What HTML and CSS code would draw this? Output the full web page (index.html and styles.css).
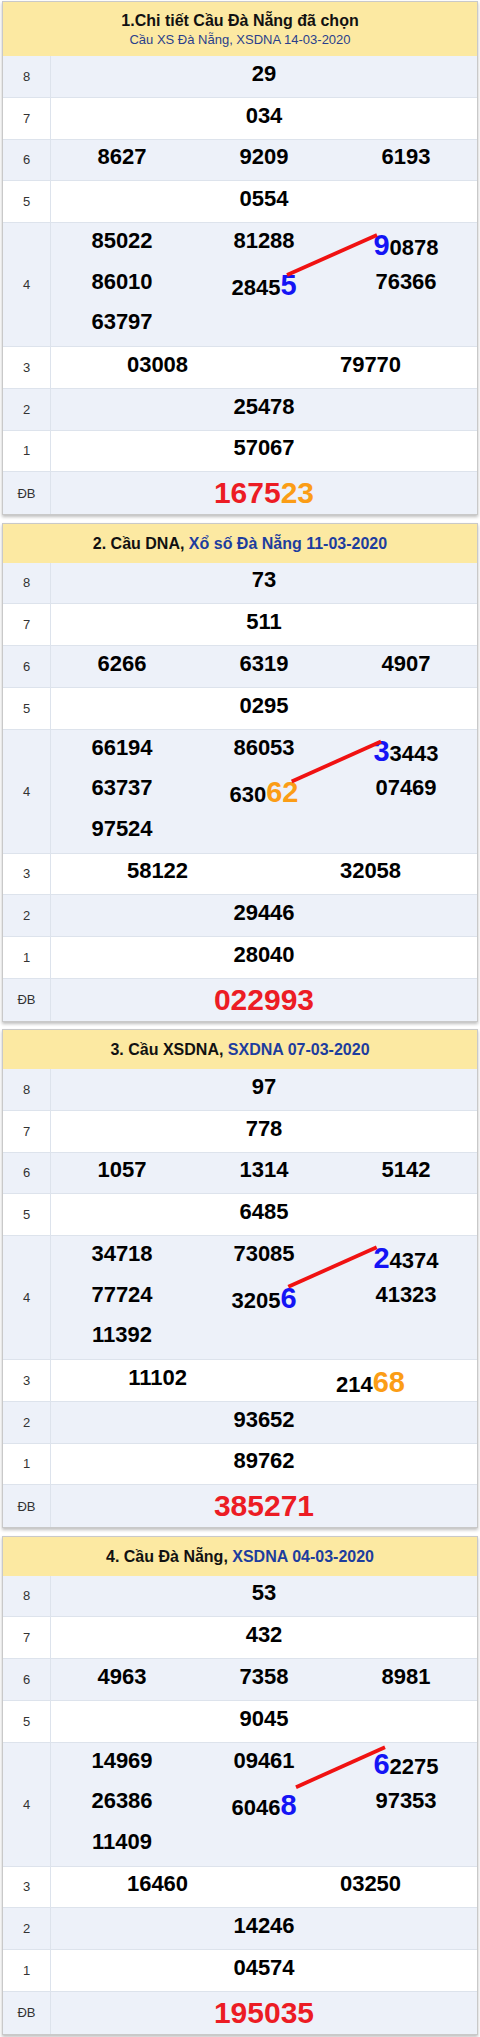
FILE: index.html
```html
<!DOCTYPE html>
<html lang="vi">
<head>
<meta charset="utf-8">
<title>Cầu Đà Nẵng</title>
<link rel="stylesheet" href="styles.css">
</head>
<body>
<div class="page">

<section class="box">
  <div class="head head-two">
    <div class="title">1.Chi tiết Cầu Đà Nẵng đã chọn</div>
    <div class="sub">Cầu XS Đà Nẵng, XSDNA 14-03-2020</div>
  </div>
  <div class="row alt"><div class="lbl">8</div><div class="nums"><div class="n">29</div></div></div>
  <div class="row"><div class="lbl">7</div><div class="nums"><div class="n">034</div></div></div>
  <div class="row alt"><div class="lbl">6</div><div class="nums"><div class="n">8627</div><div class="n">9209</div><div class="n">6193</div></div></div>
  <div class="row"><div class="lbl">5</div><div class="nums"><div class="n">0554</div></div></div>
  <div class="row alt r4"><div class="lbl">4</div>
    <div class="nums multi">
      <div class="col"><div class="ln">85022</div><div class="ln">86010</div><div class="ln">63797</div></div>
      <div class="col"><div class="ln">81288</div><div class="ln hl">2845<span class="big blue">5</span></div></div>
      <div class="col"><div class="ln hl"><span class="big blue">9</span>0878</div><div class="ln">76366</div></div>
    </div>
    <svg class="link" width="474" height="123" viewBox="0 0 474 123"><line x1="284" y1="52" x2="374" y2="12"/></svg>
  </div>
  <div class="row"><div class="lbl">3</div><div class="nums"><div class="n">03008</div><div class="n">79770</div></div></div>
  <div class="row alt"><div class="lbl">2</div><div class="nums"><div class="n">25478</div></div></div>
  <div class="row"><div class="lbl">1</div><div class="nums"><div class="n">57067</div></div></div>
  <div class="row alt last"><div class="lbl">ĐB</div><div class="nums db"><div class="n">1675<span class="orange">23</span></div></div></div>
</section>

<section class="box">
  <div class="head">2. Cầu DNA, <span class="hb">Xổ số Đà Nẵng 11-03-2020</span></div>
  <div class="row alt"><div class="lbl">8</div><div class="nums"><div class="n">73</div></div></div>
  <div class="row"><div class="lbl">7</div><div class="nums"><div class="n">511</div></div></div>
  <div class="row alt"><div class="lbl">6</div><div class="nums"><div class="n">6266</div><div class="n">6319</div><div class="n">4907</div></div></div>
  <div class="row"><div class="lbl">5</div><div class="nums"><div class="n">0295</div></div></div>
  <div class="row alt r4"><div class="lbl">4</div>
    <div class="nums multi">
      <div class="col"><div class="ln">66194</div><div class="ln">63737</div><div class="ln">97524</div></div>
      <div class="col"><div class="ln">86053</div><div class="ln hl">630<span class="big orange">62</span></div></div>
      <div class="col"><div class="ln hl"><span class="big blue">3</span>3443</div><div class="ln">07469</div></div>
    </div>
    <svg class="link" width="474" height="123" viewBox="0 0 474 123"><line x1="288.7" y1="51.5" x2="378" y2="11.5"/></svg>
  </div>
  <div class="row"><div class="lbl">3</div><div class="nums"><div class="n">58122</div><div class="n">32058</div></div></div>
  <div class="row alt"><div class="lbl">2</div><div class="nums"><div class="n">29446</div></div></div>
  <div class="row"><div class="lbl">1</div><div class="nums"><div class="n">28040</div></div></div>
  <div class="row alt last"><div class="lbl">ĐB</div><div class="nums db"><div class="n">022993</div></div></div>
</section>

<section class="box">
  <div class="head">3. Cầu XSDNA, <span class="hb">SXDNA 07-03-2020</span></div>
  <div class="row alt"><div class="lbl">8</div><div class="nums"><div class="n">97</div></div></div>
  <div class="row"><div class="lbl">7</div><div class="nums"><div class="n">778</div></div></div>
  <div class="row alt"><div class="lbl">6</div><div class="nums"><div class="n">1057</div><div class="n">1314</div><div class="n">5142</div></div></div>
  <div class="row"><div class="lbl">5</div><div class="nums"><div class="n">6485</div></div></div>
  <div class="row alt r4"><div class="lbl">4</div>
    <div class="nums multi">
      <div class="col"><div class="ln">34718</div><div class="ln">77724</div><div class="ln">11392</div></div>
      <div class="col"><div class="ln">73085</div><div class="ln hl">3205<span class="big blue">6</span></div></div>
      <div class="col"><div class="ln hl"><span class="big blue">2</span>4374</div><div class="ln">41323</div></div>
    </div>
    <svg class="link" width="474" height="123" viewBox="0 0 474 123"><line x1="285.3" y1="50.7" x2="373.7" y2="11.3"/></svg>
  </div>
  <div class="row"><div class="lbl">3</div><div class="nums"><div class="n">11102</div><div class="n hl">214<span class="big orange">68</span></div></div></div>
  <div class="row alt"><div class="lbl">2</div><div class="nums"><div class="n">93652</div></div></div>
  <div class="row"><div class="lbl">1</div><div class="nums"><div class="n">89762</div></div></div>
  <div class="row alt last"><div class="lbl">ĐB</div><div class="nums db"><div class="n">385271</div></div></div>
</section>

<section class="box">
  <div class="head">4. Cầu Đà Nẵng, <span class="hb">XSDNA 04-03-2020</span></div>
  <div class="row alt"><div class="lbl">8</div><div class="nums"><div class="n">53</div></div></div>
  <div class="row"><div class="lbl">7</div><div class="nums"><div class="n">432</div></div></div>
  <div class="row alt"><div class="lbl">6</div><div class="nums"><div class="n">4963</div><div class="n">7358</div><div class="n">8981</div></div></div>
  <div class="row"><div class="lbl">5</div><div class="nums"><div class="n">9045</div></div></div>
  <div class="row alt r4"><div class="lbl">4</div>
    <div class="nums multi">
      <div class="col"><div class="ln">14969</div><div class="ln">26386</div><div class="ln">11409</div></div>
      <div class="col"><div class="ln">09461</div><div class="ln hl">6046<span class="big blue">8</span></div></div>
      <div class="col"><div class="ln hl"><span class="big blue">6</span>2275</div><div class="ln">97353</div></div>
    </div>
    <svg class="link" width="474" height="123" viewBox="0 0 474 123"><line x1="293" y1="44.2" x2="382" y2="4.2"/></svg>
  </div>
  <div class="row"><div class="lbl">3</div><div class="nums"><div class="n">16460</div><div class="n">03250</div></div></div>
  <div class="row alt"><div class="lbl">2</div><div class="nums"><div class="n">14246</div></div></div>
  <div class="row"><div class="lbl">1</div><div class="nums"><div class="n">04574</div></div></div>
  <div class="row alt last"><div class="lbl">ĐB</div><div class="nums db"><div class="n">195035</div></div></div>
</section>

</div>
</body>
</html>
```

FILE: styles.css
```css
* { box-sizing: border-box; }

html, body {
  margin: 0;
  padding: 0;
  background: #ffffff;
}

body {
  font-family: "Liberation Sans", Arial, sans-serif;
  color: #000;
}

.page {
  padding: 1px 2px 0 2px;
}

.box {
  border: 1px solid #c9c9c9;
  background: #fff;
  box-shadow: 0 2px 3px rgba(0, 0, 0, 0.25);
  margin-bottom: 7.5px;
}

.head {
  background: #fce9a2;
  height: 39px;
  line-height: 39px;
  text-align: center;
  font-size: 16px;
  font-weight: bold;
  color: #111;
}

.head .hb {
  color: #1d3d9e;
}

.head-two {
  height: 54px;
  line-height: normal;
  padding-top: 8px;
}

.head-two .title {
  font-size: 16px;
  line-height: 21px;
  font-weight: bold;
  color: #111;
}

.head-two .sub {
  font-size: 13px;
  line-height: 17px;
  font-weight: normal;
  color: #2a3f8c;
}

.row {
  display: flex;
  height: 41.75px;
  border-bottom: 1px solid #dde3ec;
  background: #ffffff;
  position: relative;
}

.row.alt {
  background: #edf1f9;
}

.row.last {
  border-bottom: none;
}

.row.r4 {
  height: 124px;
}

.lbl {
  width: 48px;
  flex: none;
  border-right: 1px solid #dde3ec;
  display: flex;
  align-items: center;
  justify-content: center;
  font-size: 13px;
  color: #333;
}

.nums {
  flex: 1;
  display: flex;
  align-items: center;
  padding-bottom: 5px;
  font-size: 22px;
  font-weight: bold;
}

.nums .n {
  flex: 1;
  text-align: center;
  line-height: 30px;
  white-space: nowrap;
}

.nums.db {
  padding-bottom: 0;
  font-size: 30px;
  color: #ec1c24;
}

.nums.db .n {
  line-height: 36px;
}

.nums.multi {
  align-items: flex-start;
  padding-bottom: 0;
}

.col {
  flex: 1;
  display: flex;
  flex-direction: column;
  margin-top: -2px;
}

.ln {
  height: 40.6px;
  line-height: 40.6px;
  text-align: center;
  white-space: nowrap;
}

.hl {
  margin-top: 6.5px;
  margin-bottom: -6.5px;
}

.big {
  font-size: 29px;
  font-weight: bold;
  line-height: 1;
}

.blue {
  color: #1414f5;
}

.orange {
  color: #fb9d16;
}

.link {
  position: absolute;
  left: 0;
  top: 0;
  pointer-events: none;
}

.link line {
  stroke: #f01212;
  stroke-width: 3.8;
}
```
